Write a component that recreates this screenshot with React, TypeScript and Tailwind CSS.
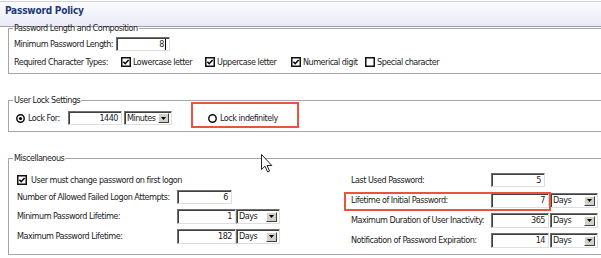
import type { ReactNode } from "react";

function Input({ value, className = "", caret = false }: { value: string; className?: string; caret?: boolean }) {
  return (
    <div
      className={`flex h-full items-center justify-end bg-white pr-[3px] border border-t-[#707070] border-l-[#707070] border-b-[#dedede] border-r-[#dedede] shadow-[inset_1px_1px_0_#404040] ${className}`}
    >
      {value}
      {caret && <span className="ml-px h-[11px] w-px bg-black" />}
    </div>
  );
}

function Select({ value, className = "" }: { value: string; className?: string }) {
  return (
    <div
      className={`flex h-full items-center bg-white pl-[2px] pr-[2px] border border-t-[#707070] border-l-[#707070] border-b-[#dedede] border-r-[#dedede] shadow-[inset_1px_1px_0_#404040] ${className}`}
    >
      <span className="flex-1">{value}</span>
      <span className="flex h-[10px] w-[11px] items-center justify-center bg-[#d4d0c8] border border-t-white border-l-white border-b-[#404040] border-r-[#404040]">
        <svg width="5" height="3" viewBox="0 0 5 3">
          <path d="M0 0H5L2.5 3Z" fill="#000" />
        </svg>
      </span>
    </div>
  );
}

function Check({ on = true }: { on?: boolean }) {
  return (
    <svg width="10" height="10" viewBox="0 0 10 10" className="shrink-0">
      <rect x="0.75" y="0.75" width="8.5" height="8.5" fill="#fff" stroke="#111" strokeWidth="1.5" />
      {on && <path d="M2.4 4.8L4.2 6.7L7.6 3" fill="none" stroke="#000" strokeWidth="1.6" />}
    </svg>
  );
}

function Radio({ on = false }: { on?: boolean }) {
  return (
    <svg width="9" height="9" viewBox="0 0 9 9" className="shrink-0">
      <circle cx="4.5" cy="4.5" r="3.7" fill="#fff" stroke="#111" strokeWidth="1.5" />
      {on && <circle cx="4.5" cy="4.5" r="1.6" fill="#000" />}
    </svg>
  );
}

function Group({ title, className, legendClass, children }: { title: string; className: string; legendClass: string; children: ReactNode }) {
  return (
    <fieldset className={`ml-[8px] w-[600px] border border-[#a6a6a6] ${className}`}>
      <legend className={`px-px leading-[10px] ${legendClass}`}>{title}</legend>
      {children}
    </fieldset>
  );
}

export default function App() {
  return (
    <div className="relative h-[258px] w-[601px] overflow-hidden bg-white font-['DejaVu_Sans_Condensed','DejaVu_Sans',sans-serif] text-[9px] leading-[11px] tracking-[-0.5px] text-[#1c1c1c]">
      {/* header */}
      <div className="mt-px h-[26px] border-t border-b border-t-[#cfd0da] border-b-[#a0a0a0] bg-gradient-to-b from-[#fcfcff] to-[#e9eaf6] pl-[5px] pt-[3px]">
        <span className="text-[10px] font-bold tracking-[-0.2px] text-[#1e3a74]">Password Policy</span>
      </div>

      <Group title="Password Length and Composition" className="mt-[-4px] pl-[5px] pb-[4px]" legendClass="-ml-px">
        <div className="mt-[4px] flex h-[14px] items-center">
          <span className="w-[102px]">Minimum Password Length:</span>
          <Input value="8" caret className="w-[54px]" />
        </div>
        <div className="mt-[4px] flex h-[14px] items-center">
          <span className="w-[107px]">Required Character Types:</span>
          <div className="flex w-[84px] items-center gap-[2px]">
            <Check />
            <span>Lowercase letter</span>
          </div>
          <div className="flex w-[86px] items-center gap-[2px]">
            <Check />
            <span>Uppercase letter</span>
          </div>
          <div className="flex w-[74px] items-center gap-[2px]">
            <Check />
            <span>Numerical digit</span>
          </div>
          <div className="flex items-center gap-[2px]">
            <Check on={false} />
            <span>Special character</span>
          </div>
        </div>
      </Group>

      <Group title="User Lock Settings" className="mt-[21px] pl-[5px] pb-[6px]" legendClass="-ml-px">
        <div className="mt-[6px] flex h-[14px] items-center pl-[2px]">
          <Radio on />
          <span className="ml-[3px] w-[40px]">Lock For:</span>
          <Input value="1440" className="w-[54px]" />
          <Select value="Minutes" className="ml-[2px] w-[48px]" />
          <div className="ml-[36px] flex items-center gap-[3px]">
            <Radio />
            <span>Lock indefinitely</span>
          </div>
        </div>
      </Group>

      <Group title="Miscellaneous" className="mt-[21px] pl-[8px] pb-[6px]" legendClass="-ml-[4px]">
        <div className="mt-[10px] flex">
          <div className="flex w-[334px] flex-col">
            <div className="flex h-[14px] items-center gap-[4px]">
              <Check />
              <span>User must change password on first logon</span>
            </div>
            <div className="mt-[3px] flex h-[14px] items-center">
              <span className="w-[160px]">Number of Allowed Failed Logon Attempts:</span>
              <Input value="6" className="w-[55px]" />
            </div>
            <div className="mt-[5px] flex h-[15px] items-center">
              <span className="w-[160px]">Minimum Password Lifetime:</span>
              <Input value="1" className="w-[59px]" />
              <Select value="Days" className="w-[44px]" />
            </div>
            <div className="mt-[5px] flex h-[15px] items-center">
              <span className="w-[160px]">Maximum Password Lifetime:</span>
              <Input value="182" className="w-[59px]" />
              <Select value="Days" className="w-[44px]" />
            </div>
          </div>
          <div className="flex flex-col">
            <div className="flex h-[14px] items-center">
              <span className="w-[140px]">Last Used Password:</span>
              <Input value="5" className="w-[54px]" />
            </div>
            <div className="mt-[6px] flex h-[15px] items-center">
              <span className="w-[140px]">Lifetime of Initial Password:</span>
              <Input value="7" className="w-[58px]" />
              <Select value="Days" className="ml-px w-[48px]" />
            </div>
            <div className="mt-[5px] flex h-[15px] items-center">
              <span className="w-[140px]">Maximum Duration of User Inactivity:</span>
              <Input value="365" className="w-[58px]" />
              <Select value="Days" className="ml-px w-[48px]" />
            </div>
            <div className="mt-[5px] flex h-[15px] items-center">
              <span className="w-[140px]">Notification of Password Expiration:</span>
              <Input value="14" className="w-[58px]" />
              <Select value="Days" className="ml-px w-[48px]" />
            </div>
          </div>
        </div>
      </Group>

      {/* annotation highlights */}
      <div className="absolute left-[191px] top-[102px] h-[26px] w-[108px] border-2 border-[#e8553f]" />
      <div className="absolute left-[344px] top-[192px] h-[19px] w-[207px] border-2 border-[#e8553f]" />

      {/* mouse pointer */}
      <svg className="absolute left-[261px] top-[154px]" width="12" height="19" viewBox="0 0 12 19">
        <path d="M0.5 0.5V15.5L4 12.2L6.6 18L8.6 17.1L6.1 11.5H10.8Z" fill="#fff" stroke="#222" strokeWidth="1" strokeLinejoin="round" />
      </svg>
    </div>
  );
}
